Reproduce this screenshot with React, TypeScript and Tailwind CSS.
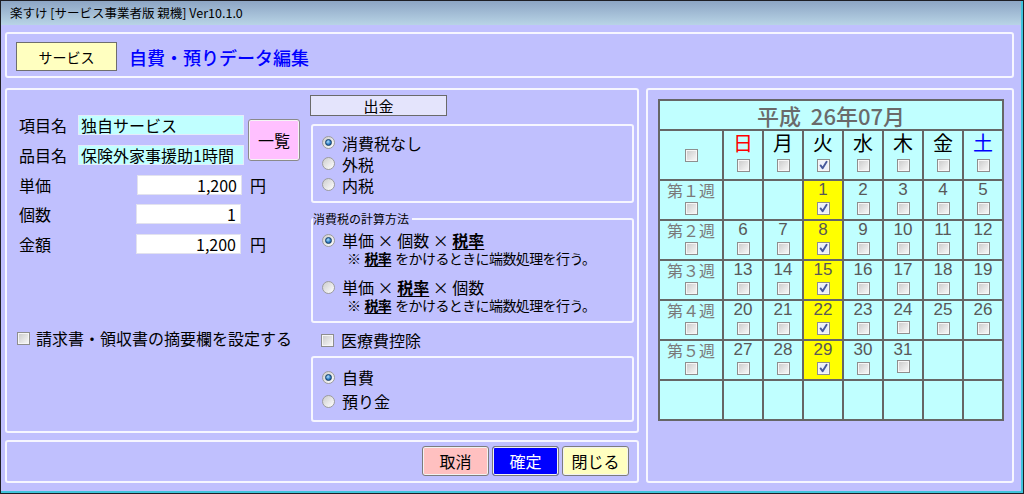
import React from "react";

const PANEL = "border-2 border-[#f6f6ff] rounded-[3px]";

function Check({ checked = false, className = "" }: { checked?: boolean; className?: string }) {
  return (
    <span
      className={`relative inline-block w-[13px] h-[13px] shrink-0 border border-[#8e8e8e] shadow-[inset_0_0_0_1px_#f6f6f6] ${
        checked ? "bg-[#eceffa]" : "bg-linear-to-br from-[#c9c9c9] to-[#fbfbfb]"
      } ${className}`}
    >
      {checked && (
        <svg viewBox="0 0 11 11" className="absolute left-0 top-0 w-[11px] h-[11px]">
          <path d="M2.6 5.4 L4.6 8.2 L8.6 1.8" fill="none" stroke="#46589c" strokeWidth="1.9" strokeLinecap="round" strokeLinejoin="round" />
        </svg>
      )}
    </span>
  );
}

function Radio({ checked = false }: { checked?: boolean }) {
  return (
    <span className="relative inline-flex items-center justify-center w-[13px] h-[13px] shrink-0 rounded-full border border-[#9c9c9c] bg-linear-to-br from-[#cdcdcd] to-[#ffffff]">
      {checked && (
        <span className="w-[7px] h-[7px] rounded-full border border-[#123c68] bg-[radial-gradient(circle_at_40%_35%,#b4e2ff_0%,#2f7fc6_55%,#0f4580_100%)]" />
      )}
    </span>
  );
}

function Zeiritsu() {
  return <span className="font-bold underline underline-offset-2">税率</span>;
}

const weeks: (number | null)[][] = [
  [null, null, 1, 2, 3, 4, 5],
  [6, 7, 8, 9, 10, 11, 12],
  [13, 14, 15, 16, 17, 18, 19],
  [20, 21, 22, 23, 24, 25, 26],
  [27, 28, 29, 30, 31, null, null],
];
const weekLabels = ["第１週", "第２週", "第３週", "第４週", "第５週"];
const days = [
  { c: "日", cls: "text-[#ff0000]" },
  { c: "月", cls: "text-black" },
  { c: "火", cls: "text-black" },
  { c: "水", cls: "text-black" },
  { c: "木", cls: "text-black" },
  { c: "金", cls: "text-black" },
  { c: "土", cls: "text-[#0000ff]" },
];

function Calendar() {
  const cells: React.ReactNode[] = [];
  cells.push(
    <div key="t" className="col-span-8 bg-[#c0ffff] flex items-center justify-center text-[22px] leading-[26px] text-[#6a6a6a] font-medium">
      平成&nbsp; 26年07月
    </div>
  );
  cells.push(
    <div key="h0" className="bg-[#c0ffff] flex items-center justify-center">
      <Check />
    </div>
  );
  days.forEach((d, i) => {
    cells.push(
      <div key={"h" + (i + 1)} className="bg-[#c0ffff] flex flex-col items-center pt-px">
        <span className={`text-[20px] leading-[22px] ${d.cls}`}>{d.c}</span>
        <Check className="mt-[5px]" checked={i === 2} />
      </div>
    );
  });
  weeks.forEach((w, wi) => {
    cells.push(
      <div key={"w" + wi} className="bg-[#c0ffff] flex flex-col items-center">
        <span className="text-[16px] leading-[18px] text-[#7a7a7a]">{weekLabels[wi]}</span>
        <Check className="mt-[3px]" />
      </div>
    );
    w.forEach((n, di) => {
      const yellow = di === 2 && n !== null;
      const up = n === 24 ? "-translate-y-[1px]" : n === 31 ? "-translate-y-[2px]" : "";
      cells.push(
        <div key={"d" + wi + "-" + di} className={`${yellow ? "bg-[#ffff00]" : "bg-[#c0ffff]"} flex flex-col items-center`}>
          {n !== null && (
            <>
              <span className="text-[17px] leading-[18px] text-[#585858] font-['Liberation_Sans',sans-serif]">{n}</span>
              <Check className={`mt-[3px] ${up}`} checked={yellow} />
            </>
          )}
        </div>
      );
    });
  });
  for (let i = 0; i < 8; i++) {
    cells.push(<div key={"e" + i} className="bg-[#c0ffff]" />);
  }
  return (
    <div className="grid grid-cols-[62px_repeat(7,38px)] grid-rows-[28px_48px_repeat(6,38px)] gap-[2px] border-2 border-[#666666] bg-[#666666] w-fit">
      {cells}
    </div>
  );
}

function Btn({ label, cls }: { label: string; cls: string }) {
  return (
    <div className={`w-[67px] h-[30px] flex items-center justify-center rounded-[3px] border border-[#7c7c7c] shadow-[inset_0_0_0_1px_#f2f2f2] text-[16px] leading-[18px] ${cls}`}>
      {label}
    </div>
  );
}

function Note() {
  return (
    <div className="ml-[25px] h-[16px] flex items-center text-[14px] leading-[16px] tracking-[-0.6px] whitespace-nowrap">
      <span>※</span>
      <span className="ml-[4px]">
        <Zeiritsu />
      </span>
      <span className="ml-[4px]">をかけるときに端数処理を行う。</span>
    </div>
  );
}

export default function App() {
  return (
    <div className="w-[1024px] h-[494px] bg-[#1e1e24] p-px font-['Noto_Sans_CJK_JP','Noto_Sans',sans-serif] text-black">
      <div className="w-full h-full flex flex-col bg-[#c0c0fe] border-r-2 border-b-2 border-[#40c4dc]">
        {/* title bar */}
        <div className="h-[24px] shrink-0 flex items-center pl-[9px] bg-linear-to-b from-[#8da5c4] to-[#b8d4e6] text-[12.5px] leading-[14px]">
          楽すけ [サービス事業者版 親機] Ver10.1.0
        </div>

        <div className="flex-1 flex flex-col pl-[4px] pr-[7px] pt-[7px]">
          {/* header panel */}
          <div className={`h-[46px] shrink-0 flex items-center pl-[9px] pt-[3px] ${PANEL}`}>
            <div className="w-[101px] h-[29px] flex items-center justify-center bg-[#ffffc0] border border-[#6e6e6e] text-[14px] leading-[16px]">
              サービス
            </div>
            <div className="ml-[12px] text-[18px] leading-[20px] text-[#0000ff] font-medium">自費・預りデータ編集</div>
          </div>

          <div className="mt-[10px] flex gap-[7px]">
            {/* left column */}
            <div className="w-[634px] flex flex-col gap-[7px]">
              <div className={`h-[345px] flex ${PANEL}`}>
                {/* left sub */}
                <div className="w-[303px] pl-[12px] pt-[25px] flex flex-col text-[16px] leading-[18px]">
                  <div className="flex">
                    <div className="flex flex-col gap-[10px]">
                      <div className="flex items-center h-[20px]">
                        <span className="w-[59px]">項目名</span>
                        <div className="w-[166px] h-[20px] bg-[#c0ffff] border border-[#e4ecfa] pl-[2px] flex items-center">独自サービス</div>
                      </div>
                      <div className="flex items-center h-[20px]">
                        <span className="w-[59px]">品目名</span>
                        <div className="w-[166px] h-[20px] bg-[#c0ffff] border border-[#e4ecfa] pl-[2px] flex items-center whitespace-nowrap">保険外家事援助1時間</div>
                      </div>
                    </div>
                    <div className="ml-[4px] mt-[4px] w-[52px] h-[42px] flex items-center justify-center bg-[#ffc0ff] border border-[#8a8a8a] rounded-[3px] shadow-[inset_0_0_0_1px_#f4f4f4]">
                      一覧
                    </div>
                  </div>
                  <div className="flex items-center h-[20px] mt-[10px]">
                    <span className="w-[118px]">単価</span>
                    <div className="w-[105px] h-[20px] bg-white border border-[#e2e2ee] pr-[4px] flex items-center justify-end">1,200</div>
                    <span className="ml-[8px]">円</span>
                  </div>
                  <div className="flex items-center h-[20px] mt-[9px]">
                    <span className="w-[117px]">個数</span>
                    <div className="w-[105px] h-[20px] bg-white border border-[#e2e2ee] pr-[4px] flex items-center justify-end">1</div>
                  </div>
                  <div className="flex items-center h-[20px] mt-[10px]">
                    <span className="w-[117px]">金額</span>
                    <div className="w-[105px] h-[20px] bg-white border border-[#e2e2ee] pr-[4px] flex items-center justify-end">1,200</div>
                    <span className="ml-[9px]">円</span>
                  </div>
                  <div className="flex items-center h-[20px] mt-[74px] -ml-[2px] gap-[6px] whitespace-nowrap">
                    <Check />
                    <span>請求書・領収書の摘要欄を設定する</span>
                  </div>
                </div>

                {/* middle column */}
                <div className="w-[324px] pt-[5px] flex flex-col text-[16px] leading-[18px]">
                  <div className="w-[137px] h-[21px] flex items-center justify-center bg-[#e4e4fc] border border-[#6a6a6a] text-[15px]">
                    出金
                  </div>
                  <div className={`ml-px mt-[8px] w-[323px] h-[79px] pl-[9px] pt-[6px] flex flex-col ${PANEL}`}>
                    {[
                      ["消費税なし", true],
                      ["外税", false],
                      ["内税", false],
                    ].map(([t, c]) => (
                      <div key={t as string} className="flex items-center h-[21px] gap-[7px]">
                        <Radio checked={c as boolean} />
                        <span>{t as string}</span>
                      </div>
                    ))}
                  </div>
                  <fieldset className={`ml-px mt-[10px] w-[323px] h-[110px] pl-[9px] ${PANEL}`}>
                    <legend className="text-[12px] leading-[12px] pr-[3px] -ml-[9px]">消費税の計算方法</legend>
                    <div className="mt-[5px] flex items-center h-[20px] gap-[7px] whitespace-nowrap">
                      <Radio checked />
                      <span>
                        単価 × 個数 × <Zeiritsu />
                      </span>
                    </div>
                    <Note />
                    <div className="mt-[11px] flex items-center h-[20px] gap-[7px] whitespace-nowrap">
                      <Radio />
                      <span>
                        単価 × <Zeiritsu /> × 個数
                      </span>
                    </div>
                    <Note />
                  </fieldset>
                  <div className="mt-[7px] ml-[11px] flex items-center h-[20px] gap-[7px]">
                    <Check />
                    <span>医療費控除</span>
                  </div>
                  <div className={`ml-px mt-[6px] w-[323px] h-[66px] pl-[9px] pt-[9px] flex flex-col gap-[4px] ${PANEL}`}>
                    <div className="flex items-center h-[20px] gap-[7px]">
                      <Radio checked />
                      <span>自費</span>
                    </div>
                    <div className="flex items-center h-[20px] gap-[7px]">
                      <Radio />
                      <span>預り金</span>
                    </div>
                  </div>
                </div>
              </div>

              {/* bottom buttons */}
              <div className={`h-[43px] flex justify-end items-start pt-[4px] pr-[8px] gap-[3px] ${PANEL}`}>
                <Btn label="取消" cls="bg-[#ffc0c0] text-black" />
                <Btn label="確定" cls="bg-[#0000ff] text-white" />
                <Btn label="閉じる" cls="bg-[#ffffc0] text-black" />
              </div>
            </div>

            {/* right panel */}
            <div className={`w-[368px] h-[395px] pl-[10px] pt-[9px] ${PANEL}`}>
              <Calendar />
            </div>
          </div>
        </div>
      </div>
    </div>
  );
}
